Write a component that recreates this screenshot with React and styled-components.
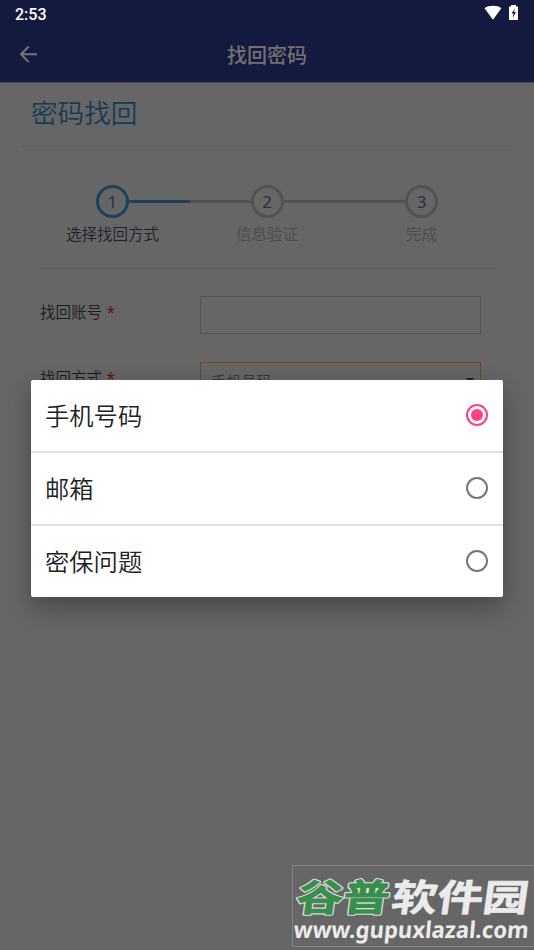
import React from 'react';
import styled, { createGlobalStyle } from 'styled-components';

const GlobalStyle = createGlobalStyle`
  * {
    box-sizing: border-box;
  }

  body {
    margin: 0;
    background: #666;
    font-family: 'Noto Sans', 'Noto Sans CJK SC', sans-serif;
  }
`;

const Screen = styled.div`
  position: relative;
  width: 534px;
  height: 950px;
  overflow: hidden;
  background: #666;
  font-family: 'Noto Sans CJK SC', sans-serif;
  font-weight: 350;
`;

const StatusBar = styled.div`
  display: flex;
  justify-content: space-between;
  height: 28px;
  padding: 0 15px;
  background: #141940;
  color: #fff;
  font: 500 16px/29px Roboto, sans-serif;

  svg {
    display: block;
    margin-top: 4px;
  }
`;

const Header = styled.header`
  display: grid;
  grid-template-columns: 60px 1fr 60px;
  height: 55px;
  background: #141940;
  border-bottom: 1px solid #444a5f;

  svg {
    margin: 17px 0 0 19px;
  }

  h1 {
    margin: 0;
    color: #727170;
    font-size: 20px;
    font-weight: 500;
    line-height: 53px;
    text-align: center;
  }
`;

const Content = styled.main`
  padding: 0 22px;
`;

const PageTitle = styled.h2`
  height: 64px;
  margin: 0;
  padding-left: 9px;
  border-bottom: 1px dotted #585858;
  color: #143b57;
  font-size: 26.6px;
  font-weight: 350;
  line-height: 57px;
`;

const Steps = styled.div`
  display: grid;
  grid-template-columns: repeat(3, 154.6px);
  justify-content: center;
  height: 122px;
  margin: 0 14px;
  padding-top: 38px;
  border-bottom: 1px solid #606162;
`;

const Step = styled.div`
  display: flex;
  flex-direction: column;
  align-items: center;
  color: ${({ $active }) => ($active ? '#1c222d' : '#484b50')};
  font-size: 15.5px;
  line-height: 22px;
`;

const StepTop = styled.div`
  display: flex;
  align-items: center;
  width: 100%;
  margin-bottom: 4px;
`;

const Line = styled.span`
  flex: 1;
  height: 3px;
  background: ${({ $color }) => $color || 'transparent'};
`;

const Circle = styled.span`
  width: 33px;
  height: 33px;
  border: 3px solid ${({ $active }) => ($active ? '#1e425e' : '#505254')};
  border-radius: 50%;
  color: #2b3038;
  font: 17px/27px 'Noto Sans', sans-serif;
  text-align: center;
`;

const FormRow = styled.div`
  display: flex;
  height: 38px;
  margin: ${({ $first }) => ($first ? '27px' : '28px')} 31px 0 18px;
`;

const Label = styled.label`
  width: 160px;
  color: #1c1c1c;
  font-size: 15.5px;
  line-height: 31px;

  span {
    margin-left: 1px;
    color: #650b10;
    font-family: 'Noto Sans', sans-serif;
    font-weight: 400;
  }
`;

const Field = styled.div`
  display: flex;
  flex: 1;
  justify-content: space-between;
  padding: 0 6px 0 10px;
  border: 1px solid ${({ $focused }) => ($focused ? '#754619' : '#525354')};
  color: #363636;
  font-size: 15.2px;
  line-height: 34px;

  i {
    width: 0;
    height: 0;
    margin-top: 15px;
    border: 4px solid transparent;
    border-top: 6px solid #222;
  }
`;

const Dialog = styled.ul`
  position: absolute;
  top: 380px;
  left: 31px;
  width: 472px;
  height: 217px;
  margin: 0;
  padding: 0;
  border-radius: 2px;
  background: #fff;
  box-shadow: 0 13px 24px rgba(0, 0, 0, 0.22), 0 2px 20px rgba(0, 0, 0, 0.1);
  list-style: none;
`;

const Option = styled.li`
  display: flex;
  align-items: center;
  justify-content: space-between;
  height: 73px;
  padding: 0 15px 2px 14px;
  border-bottom: 2px solid #e1e1e1;
  color: #212121;
  font-size: 24.3px;
  line-height: 36px;

  &:last-child {
    height: 71px;
    border-bottom: 0;
  }
`;

const Radio = styled.span`
  display: flex;
  align-items: center;
  justify-content: center;
  width: 22px;
  height: 22px;
  margin-top: 1px;
  border: 2px solid ${({ $checked }) => ($checked ? '#ff4081' : '#757575')};
  border-radius: 50%;

  &::after {
    content: '';
    width: 12px;
    height: 12px;
    border-radius: 50%;
    background: ${({ $checked }) => ($checked ? '#ff4081' : 'transparent')};
  }
`;

const Watermark = styled.svg`
  position: absolute;
  top: 865px;
  left: 292px;
`;

const steps = [
  { label: '选择找回方式', right: '#1e425e', active: true },
  { label: '信息验证', left: '#505254', right: '#505254' },
  { label: '完成', left: '#505254' },
];

const options = ['手机号码', '邮箱', '密保问题'];

const App = () => {
  return (
    <Screen>
      <GlobalStyle />
      <StatusBar>
        <span>2:53</span>
        <svg width="36" height="18" viewBox="0 0 36 18" fill="#fff">
          <path d="M1.500 4.200C6.200 1 13.700 1 18.400 4.200L10 15.700Z" />
          <path d="M26 2.500h2V1h5v1.500h2V16h-9z" />
          <path d="M32 4.500 28.500 9.500h2l-.8 4.500 3.300-6h-2z" fill="#141940" />
        </svg>
      </StatusBar>
      <Header>
        <svg width="19" height="19" viewBox="0 0 19 19" fill="none" stroke="#777674" strokeWidth="2">
          <path d="M18 9.300H2M9.700 1.500 2 9.300l7.700 7.800" />
        </svg>
        <h1>找回密码</h1>
      </Header>
      <Content>
        <PageTitle>密码找回</PageTitle>
        <Steps>
          {steps.map((step, i) => (
            <Step key={step.label} $active={step.active}>
              <StepTop>
                <Line $color={step.left} />
                <Circle $active={step.active}>{i + 1}</Circle>
                <Line $color={step.right} />
              </StepTop>
              {step.label}
            </Step>
          ))}
        </Steps>
        <FormRow $first>
          <Label>找回账号 <span>*</span></Label>
          <Field />
        </FormRow>
        <FormRow>
          <Label>找回方式 <span>*</span></Label>
          <Field $focused>
            手机号码
            <i />
          </Field>
        </FormRow>
      </Content>

      <Dialog>
        {options.map((option, i) => (
          <Option key={option}>
            {option}
            <Radio $checked={i === 0} />
          </Option>
        ))}
      </Dialog>

      <Watermark width="242" height="85" viewBox="0 0 242 85">
        <path d="M242 .5H.5V81.500H242" fill="none" stroke="#858585" />
        <g
          transform="translate(3 46) skewX(-8)"
          fontFamily="'Noto Sans CJK SC', sans-serif"
          fontWeight="700"
          fontSize="37"
          strokeLinejoin="round"
        >
          <text textLength="93" lengthAdjust="spacingAndGlyphs" fill="none" stroke="#dedede" strokeWidth="3">谷普</text>
          <text textLength="93" lengthAdjust="spacingAndGlyphs" fill="#388e4b" stroke="#388e4b" strokeWidth=".8">谷普</text>
          <text x="95" textLength="137" lengthAdjust="spacingAndGlyphs" fill="#ebebeb" stroke="#ebebeb" strokeWidth=".6">软件园</text>
        </g>
        <text
          transform="translate(1 73) skewX(-5)"
          textLength="235"
          lengthAdjust="spacingAndGlyphs"
          fill="#ebebeb"
          fontFamily="'Noto Sans', sans-serif"
          fontSize="23"
          fontWeight="700"
        >
          www.gupuxlazal.com
        </text>
      </Watermark>
    </Screen>
  );
};

export default App;
